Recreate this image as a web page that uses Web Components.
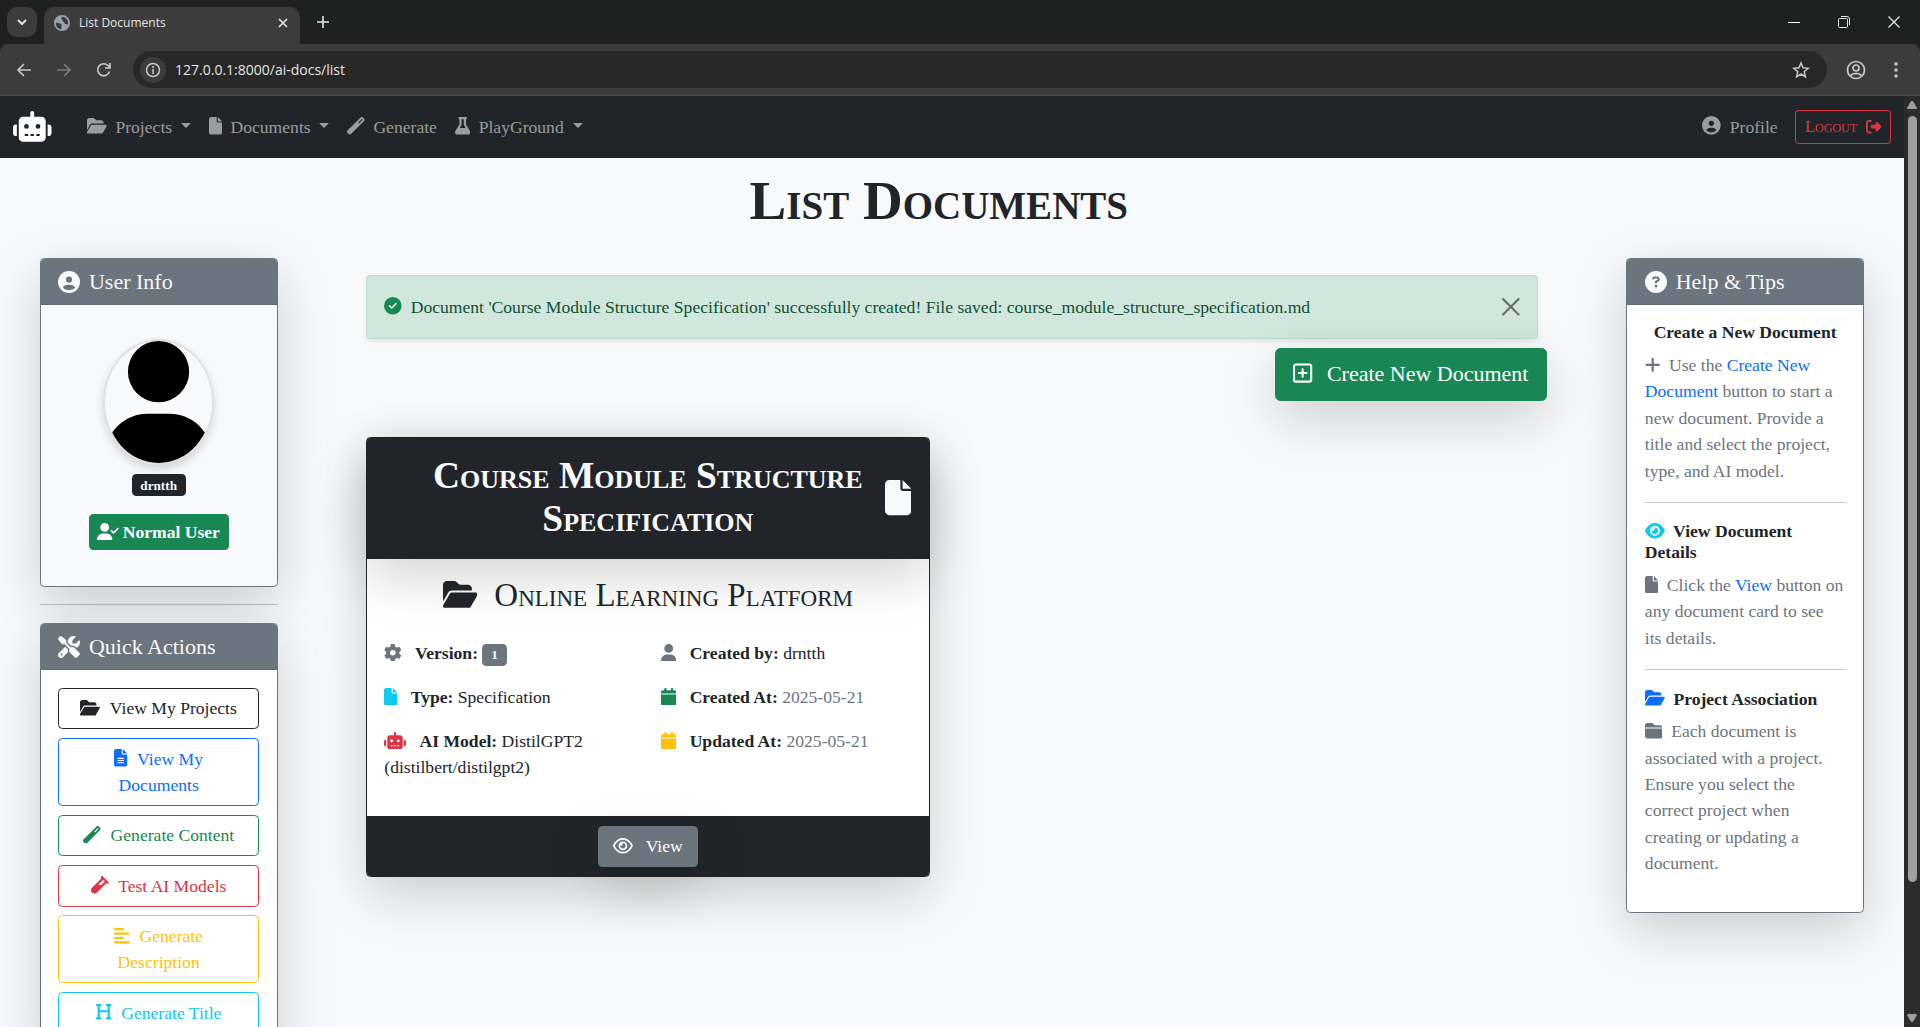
<!DOCTYPE html>
<html lang="en">
<head>
<meta charset="utf-8">
<title>List Documents</title>
<style>
  html, body { height: 100%; }
  body { margin: 0; background: #f8f9fa; font-family: "Liberation Serif", "Times New Roman", serif; color: #212529; }
</style>
</head>
<body>
<browser-window></browser-window>

<script>
const ICONS = {
  'folder-open': [576, 'M88.7 223.8L0 375.8V96C0 60.7 28.7 32 64 32H181.5c17 0 33.3 6.7 45.3 18.7l26.5 26.5c12 12 28.3 18.7 45.3 18.7H416c35.3 0 64 28.7 64 64v32H144c-22.8 0-43.8 12.1-55.3 31.8zm27.6 16.1C122.1 230 132.6 224 144 224H544c11.5 0 22 6.1 27.7 16.1s5.7 22.2-.1 32.1l-112 192C453.9 474 443.4 480 432 480H32c-11.5 0-22-6.1-27.7-16.1s-5.7-22.2 .1-32.1l112-192z'],
  'folder-closed': [512, 'M448 480H64c-35.3 0-64-28.7-64-64V192H512V416c0 35.3-28.7 64-64 64zm64-320H0V96C0 60.7 28.7 32 64 32H192c20.1 0 39.1 9.5 51.2 25.6l19.2 25.6c6 8.1 15.5 12.8 25.6 12.8H448c35.3 0 64 28.7 64 64z'],
  'file': [384, 'M0 64C0 28.7 28.7 0 64 0H224V128c0 17.7 14.3 32 32 32H384V448c0 35.3-28.7 64-64 64H64c-35.3 0-64-28.7-64-64V64zm384 64H256V0L384 128z'],
  'file-lines': [384, 'M64 0C28.7 0 0 28.7 0 64V448c0 35.3 28.7 64 64 64H320c35.3 0 64-28.7 64-64V160H256c-17.7 0-32-14.3-32-32V0H64zM256 0V128H384L256 0zM112 256H272c8.8 0 16 7.2 16 16s-7.2 16-16 16H112c-8.8 0-16-7.2-16-16s7.2-16 16-16zm0 64H272c8.8 0 16 7.2 16 16s-7.2 16-16 16H112c-8.8 0-16-7.2-16-16s7.2-16 16-16zm0 64H272c8.8 0 16 7.2 16 16s-7.2 16-16 16H112c-8.8 0-16-7.2-16-16s7.2-16 16-16z'],
  'circle-user': [512, 'M399 384.2C376.9 345.8 335.4 320 288 320H224c-47.4 0-88.9 25.8-111 64.2c35.2 39.2 86.2 63.8 143 63.8s107.8-24.7 143-63.8zM0 256a256 256 0 1 1 512 0A256 256 0 1 1 0 256zm256 16a72 72 0 1 0 0-144 72 72 0 1 0 0 144z'],
  'user': [448, 'M224 256A128 128 0 1 0 224 0a128 128 0 1 0 0 256zm-45.7 48C79.8 304 0 383.8 0 482.3C0 498.7 13.3 512 29.7 512H418.3c16.4 0 29.7-13.3 29.7-29.7C448 383.8 368.2 304 269.7 304H178.3z'],
  'user-check': [640, 'M96 128a128 128 0 1 1 256 0A128 128 0 1 1 96 128zM0 482.3C0 383.8 79.8 304 178.3 304h91.4C368.2 304 448 383.8 448 482.3c0 16.4-13.3 29.7-29.7 29.7H29.7C13.3 512 0 498.7 0 482.3zM625 177L497 305c-9.4 9.4-24.6 9.4-33.9 0l-64-64c-9.4-9.4-9.4-24.6 0-33.9s24.6-9.4 33.9 0l47 47L591 143c9.4-9.4 24.6-9.4 33.9 0s9.4 24.6 0 33.9z'],
  'robot': [640, 'M320 0c17.7 0 32 14.3 32 32V96H472c39.8 0 72 32.2 72 72V440c0 39.8-32.2 72-72 72H168c-39.8 0-72-32.2-72-72V168c0-39.8 32.2-72 72-72H288V32c0-17.7 14.3-32 32-32zM208 384c-8.8 0-16 7.2-16 16s7.2 16 16 16h32c8.8 0 16-7.2 16-16s-7.2-16-16-16H208zm96 0c-8.8 0-16 7.2-16 16s7.2 16 16 16h32c8.8 0 16-7.2 16-16s-7.2-16-16-16H304zm96 0c-8.8 0-16 7.2-16 16s7.2 16 16 16h32c8.8 0 16-7.2 16-16s-7.2-16-16-16H400zM264 256a40 40 0 1 0 -80 0 40 40 0 1 0 80 0zm152 40a40 40 0 1 0 0-80 40 40 0 1 0 0 80zM48 224H64V416H48c-26.5 0-48-21.5-48-48V272c0-26.5 21.5-48 48-48zm544 0c26.5 0 48 21.5 48 48v96c0 26.5-21.5 48-48 48H576V224h16z'],
  'circle-check': [512, 'M256 512A256 256 0 1 0 256 0a256 256 0 1 0 0 512zM369 209L241 337c-9.4 9.4-24.6 9.4-33.9 0l-64-64c-9.4-9.4-9.4-24.6 0-33.9s24.6-9.4 33.9 0l47 47L335 175c9.4-9.4 24.6-9.4 33.9 0s9.4 24.6 0 33.9z'],
  'circle-question': [512, 'M256 512A256 256 0 1 0 256 0a256 256 0 1 0 0 512zM169.8 165.3c7.9-22.3 29.1-37.3 52.8-37.3h58.3c34.9 0 63.1 28.3 63.1 63.1c0 22.6-12.1 43.5-31.7 54.8L280 264.4c-.2 13-10.9 23.6-24 23.6c-13.3 0-24-10.7-24-24V250.5c0-8.6 4.6-16.5 12.1-20.8l44.3-25.4c4.7-2.7 7.6-7.7 7.6-13.1c0-8.4-6.8-15.1-15.1-15.1H222.6c-3.4 0-6.4 2.1-7.5 5.3l-.4 1.2c-4.4 12.5-18.2 19-30.6 14.6s-19-18.2-14.6-30.6l.4-1.2zM224 352a32 32 0 1 1 64 0 32 32 0 1 1 -64 0z'],
  'gear': [512, 'M495.9 166.6c3.2 8.7 .5 18.4-6.4 24.6l-43.3 39.4c1.1 8.3 1.7 16.8 1.7 25.4s-.6 17.1-1.7 25.4l43.3 39.4c6.9 6.2 9.6 15.9 6.4 24.6c-4.4 11.9-9.7 23.3-15.8 34.3l-4.7 8.1c-6.6 11-14 21.4-22.1 31.2c-5.9 7.2-15.7 9.6-24.5 6.8l-55.7-17.7c-13.4 10.3-28.2 18.9-44 25.4l-12.5 57.1c-2 9.1-9 16.3-18.2 17.8c-13.8 2.3-28 3.5-42.5 3.5s-28.7-1.2-42.5-3.5c-9.2-1.5-16.2-8.7-18.2-17.8l-12.5-57.1c-15.8-6.5-30.6-15.1-44-25.4L83.1 425.9c-8.8 2.8-18.6 .3-24.5-6.8c-8.1-9.8-15.5-20.2-22.1-31.2l-4.7-8.1c-6.1-11-11.4-22.4-15.8-34.3c-3.2-8.7-.5-18.4 6.4-24.6l43.3-39.4C64.6 273.1 64 264.6 64 256s.6-17.1 1.7-25.4L22.4 191.2c-6.9-6.2-9.6-15.9-6.4-24.6c4.4-11.9 9.7-23.3 15.8-34.3l4.7-8.1c6.6-11 14-21.4 22.1-31.2c5.9-7.2 15.7-9.6 24.5-6.8l55.7 17.7c13.4-10.3 28.2-18.9 44-25.4l12.5-57.1c2-9.1 9-16.3 18.2-17.8C227.3 1.2 241.5 0 256 0s28.7 1.2 42.5 3.5c9.2 1.5 16.2 8.7 18.2 17.8l12.5 57.1c15.8 6.5 30.6 15.1 44 25.4l55.7-17.7c8.8-2.8 18.6-.3 24.5 6.8c8.1 9.8 15.5 20.2 22.1 31.2l4.7 8.1c6.1 11 11.4 22.4 15.8 34.3zM256 336a80 80 0 1 0 0-160 80 80 0 1 0 0 160z'],
  'eye': [576, 'M288 32c-80.8 0-145.5 36.8-192.6 80.6C48.6 156 17.3 208 2.5 243.7c-3.3 7.9-3.3 16.7 0 24.6C17.3 304 48.6 356 95.4 399.4C142.5 443.2 207.2 480 288 480s145.5-36.8 192.6-80.6c46.8-43.5 78.1-95.4 93-131.1c3.3-7.9 3.3-16.7 0-24.6c-14.9-35.7-46.2-87.7-93-131.1C433.5 68.8 368.8 32 288 32zM144 256a144 144 0 1 1 288 0 144 144 0 1 1 -288 0zm144-64c0 35.3-28.7 64-64 64c-7.1 0-13.9-1.2-20.3-3.3c-5.5-1.8-11.9 1.6-11.7 7.4c.3 6.9 1.3 13.8 3.2 20.7c13.7 51.2 66.4 81.6 117.6 67.9s81.6-66.4 67.9-117.6c-11.1-41.5-47.8-69.4-88.6-71.1c-5.8-.2-9.2 6.1-7.4 11.7c2.1 6.4 3.3 13.2 3.3 20.3z'],
  'eye-outline': [576, 'M288 80c-65.2 0-118.8 29.6-159.9 67.7C89.6 183.5 63 226 49.4 256c13.6 30 40.2 72.5 78.6 108.3C169.2 402.4 222.8 432 288 432s118.8-29.6 159.9-67.7C486.4 328.5 513 286 526.6 256c-13.6-30-40.2-72.5-78.6-108.3C406.8 109.6 353.2 80 288 80zM95.4 112.6C142.5 68.8 207.2 32 288 32s145.5 36.8 192.6 80.6c46.8 43.5 78.1 95.4 93 131.1c3.3 7.9 3.3 16.7 0 24.6c-14.9 35.7-46.2 87.7-93 131.1C433.5 443.2 368.8 480 288 480s-145.5-36.8-192.6-80.6C48.6 356 17.3 304 2.5 268.3c-3.3-7.9-3.3-16.7 0-24.6C17.3 208 48.6 156 95.4 112.6zM288 336c44.2 0 80-35.8 80-80s-35.8-80-80-80c-.7 0-1.3 0-2 0c1.3 5.1 2 10.5 2 16c0 35.3-28.7 64-64 64c-5.5 0-10.9-.7-16-2c0 .7 0 1.3 0 2c0 44.2 35.8 80 80 80zm0-208a128 128 0 1 1 0 256 128 128 0 1 1 0-256z'],
  'square-plus': [448, 'M64 80c-8.8 0-16 7.2-16 16V416c0 8.8 7.2 16 16 16H384c8.8 0 16-7.2 16-16V96c0-8.8-7.2-16-16-16H64zM0 96C0 60.7 28.7 32 64 32H384c35.3 0 64 28.7 64 64V416c0 35.3-28.7 64-64 64H64c-35.3 0-64-28.7-64-64V96zM200 344V280H136c-13.3 0-24-10.7-24-24s10.7-24 24-24h64V168c0-13.3 10.7-24 24-24s24 10.7 24 24v64h64c13.3 0 24 10.7 24 24s-10.7 24-24 24H248v64c0 13.3-10.7 24-24 24s-24-10.7-24-24z'],
  'plus': [448, 'M256 80c0-17.7-14.3-32-32-32s-32 14.3-32 32V224H48c-17.7 0-32 14.3-32 32s14.3 32 32 32H192V432c0 17.7 14.3 32 32 32s32-14.3 32-32V288H400c17.7 0 32-14.3 32-32s-14.3-32-32-32H256V80z'],
  'calendar': [448, 'M96 32V64H48C21.5 64 0 85.5 0 112v48H448V112c0-26.5-21.5-48-48-48H352V32c0-17.7-14.3-32-32-32s-32 14.3-32 32V64H160V32c0-17.7-14.3-32-32-32S96 14.3 96 32zM448 192H0V464c0 26.5 21.5 48 48 48H400c26.5 0 48-21.5 48-48V192z'],
  'sign-out': [512, 'M377.9 105.9L500.7 228.7c7.2 7.2 11.3 17.1 11.3 27.3s-4.1 20.1-11.3 27.3L377.9 406.1c-6.4 6.4-15 9.9-24 9.9c-18.7 0-33.9-15.2-33.9-33.9l0-62.1-128 0c-17.7 0-32-14.3-32-32l0-64c0-17.7 14.3-32 32-32l128 0 0-62.1c0-18.7 15.2-33.9 33.9-33.9c9 0 17.6 3.6 24 9.9zM160 96L96 96c-17.7 0-32 14.3-32 32l0 256c0 17.7 14.3 32 32 32l64 0c17.7 0 32 14.3 32 32s-14.3 32-32 32l-64 0c-53 0-96-43-96-96L0 128C0 75 43 32 96 32l64 0c17.7 0 32 14.3 32 32s-14.3 32-32 32z'],
  'flask': [448, 'M288 0H160 128C110.3 0 96 14.3 96 32s14.3 32 32 32V196.8c0 11.8-3.3 23.5-9.5 33.5L10.3 406.2C3.6 417.2 0 429.7 0 442.6C0 480.9 31.1 512 69.4 512H378.6c38.3 0 69.4-31.1 69.4-69.4c0-12.8-3.6-25.4-10.3-36.4L329.5 230.4c-6.2-10.1-9.5-21.7-9.5-33.5V64c17.7 0 32-14.3 32-32s-14.3-32-32-32H288zM192 196.8V64h64V196.8c0 23.7 6.6 46.9 19 67.1L309.5 320h-171L173 263.9c12.4-20.2 19-43.4 19-67.1z'],
  'align-left': [448, 'M288 64c0 17.7-14.3 32-32 32H32C14.3 96 0 81.7 0 64S14.3 32 32 32H256c17.7 0 32 14.3 32 32zm0 256c0 17.7-14.3 32-32 32H32c-17.7 0-32-14.3-32-32s14.3-32 32-32H256c17.7 0 32 14.3 32 32zM0 192c0-17.7 14.3-32 32-32H416c17.7 0 32 14.3 32 32s-14.3 32-32 32H32c-17.7 0-32-14.3-32-32zM448 448c0 17.7-14.3 32-32 32H32c-17.7 0-32-14.3-32-32s14.3-32 32-32H416c17.7 0 32 14.3 32 32z'],
  'heading': [448, 'M0 64C0 46.3 14.3 32 32 32H80h48c17.7 0 32 14.3 32 32s-14.3 32-32 32H112V208H336V96H320c-17.7 0-32-14.3-32-32s14.3-32 32-32h48 48c17.7 0 32 14.3 32 32s-14.3 32-32 32H400V240 416h16c17.7 0 32 14.3 32 32s-14.3 32-32 32H368 320c-17.7 0-32-14.3-32-32s14.3-32 32-32h16V272H112V416h16c17.7 0 32 14.3 32 32s-14.3 32-32 32H80 32c-17.7 0-32-14.3-32-32s14.3-32 32-32H48V240 96H32C14.3 96 0 81.7 0 64z'],
  'wand': [512, 'M14.1 463.3c-18.7-18.7-18.7-49.1 0-67.9L395.4 14.1c18.7-18.7 49.1-18.7 67.9 0l34.6 34.6c18.7 18.7 18.7 49.1 0 67.9L116.5 497.9c-18.7 18.7-49.1 18.7-67.9 0L14.1 463.3zM347.6 187.6l105-105L429.4 59.3l-105 105 23.3 23.3z'],
  'vial': [512, 'M342.6 9.4c-12.5-12.5-32.8-12.5-45.3 0s-12.5 32.8 0 45.3l9.4 9.4L28.1 342.6C10.1 360.6 0 385 0 410.5V416c0 53 43 96 96 96h5.5c25.5 0 49.9-10.1 67.9-28.1L448 205.3l9.4 9.4c12.5 12.5 32.8 12.5 45.3 0s12.5-32.8 0-45.3l-32-32-96-96-32-32zM205.3 256L352 109.3 402.7 160l-96 96H205.3z'],
  'tools': [512, 'M78.6 5C69.1-2.4 55.6-1.5 47 7L7 47c-8.5 8.5-9.4 22-2.1 31.6l80 104c4.5 5.9 11.6 9.4 19 9.4h54.1l109 109c-14.7 29-10 65.4 14.3 89.6l112 112c12.5 12.5 32.8 12.5 45.3 0l64-64c12.5-12.5 12.5-32.8 0-45.3l-112-112c-24.2-24.2-60.6-29-89.6-14.3l-109-109V104c0-7.5-3.5-14.5-9.4-19L78.6 5zM19.9 396.1C7.2 408.8 0 426.1 0 444.1C0 481.6 30.4 512 67.9 512c18 0 35.3-7.2 48-19.9L233.7 374.3c-7.8-20.9-9-43.6-3.6-65.1l-61.7-61.7L19.9 396.1zM512 144c0-10.5-1.1-20.7-3.2-30.5c-2.4-11.2-16.1-14.1-24.2-6l-63.9 63.9c-3 3-7.1 4.7-11.3 4.7H352c-8.8 0-16-7.2-16-16V102.6c0-4.2 1.7-8.3 4.7-11.3l63.9-63.9c8.1-8.1 5.2-21.8-6-24.2C388.7 1.1 378.5 0 368 0C288.5 0 224 64.5 224 144l0 .8 85.3 85.3c36-9.1 75.8 .5 104 28.7L429 274.5c49-23 83-72.8 83-130.5zM56 432a24 24 0 1 1 48 0 24 24 0 1 1 -48 0z']
};

const define = (name, html) => customElements.define(name, class extends HTMLElement {
  constructor() {
    super();
    this.attachShadow({ mode: 'open' }).innerHTML = '<style>*,*::before,*::after{box-sizing:border-box}</style>' + html;
  }
});

customElements.define('doc-icon', class extends HTMLElement {
  connectedCallback() {
    if (this.shadowRoot) return;
    const [w, d] = ICONS[this.getAttribute('name')];
    this.attachShadow({ mode: 'open' }).innerHTML = `
      <style>
        :host { display: inline-block; vertical-align: -0.125em; line-height: 1; flex: none; }
        svg { display: block; height: 1em; fill: currentColor; }
      </style>
      <svg viewBox="0 0 ${w} 512" aria-hidden="true"><path d="${d}"/></svg>`;
  }
});

/* Shared button: variant sets the colour, size sets the metrics */
customElements.define('app-button', class extends HTMLElement {
  connectedCallback() {
    if (this.shadowRoot) return;
    const icon = this.getAttribute('icon');
    const mark = icon ? `<doc-icon name="${icon}"></doc-icon> ` : '';
    const end = this.getAttribute('icon-end');
    const tail = end ? ` <doc-icon class="end" name="${end}"></doc-icon>` : '';
    this.attachShadow({ mode: 'open' }).innerHTML = `
      <style>
        :host { display: block; --c: #212529; }
        :host([variant=primary]) { --c: #0d6efd; }
        :host([variant=success]) { --c: #198754; }
        :host([variant=danger]) { --c: #dc3545; }
        :host([variant=warning]) { --c: #ffc107; }
        :host([variant=info]) { --c: #0dcaf0; }
        :host([variant=secondary]) { --c: #6c757d; }
        button { box-sizing: border-box; width: 100%; margin: 0; font: inherit; font-size: 16px; line-height: 24px; text-align: center;
          padding: 6px 13px; border: 1px solid var(--c); border-radius: 4px; color: var(--c); background: transparent; cursor: pointer; }
        :host([solid]) button { background: var(--c); color: #fff; box-shadow: 0 16px 48px rgba(0,0,0,.175); }
        :host([size=lg]) button { font-size: 20px; line-height: 31px; padding: 8px 16px; border-radius: 5px; }
        :host([size=sm]) button { font-size: 15px; line-height: 21px; padding: 4px 8px; border-radius: 3px; font-variant: small-caps; }
        doc-icon { margin-right: 5px; }
        :host([solid]) doc-icon { margin-right: 8px; }
        doc-icon.end { margin: 0 0 0 4px; font-size: 14px; }
      </style>
      <button type="button">${mark}<slot></slot>${tail}</button>`;
  }
});

define('side-card', `
  <style>
    :host { display: block; border: 1px solid #6c757d; border-radius: 4px; background: var(--card-bg, #fff);
      box-shadow: 0 16px 48px rgba(0,0,0,.175); }
    header { padding: 9px 16px 8px; background: #6c757d; border-bottom: 1px solid #616971; color: #f8f9fa; border-radius: 3px 3px 0 0;
      font-size: 20px; line-height: 24px; }
    .body { padding: 16px; }
    ::slotted(h2) { margin: 0; font-size: 20px; font-weight: 400; display: flex; align-items: center; gap: 8px; }
  </style>
  <header><slot name="title"></slot></header>
  <div class="body"><slot></slot></div>`);

define('site-nav', `
  <style>
    :host { display: block; background: #212529; color: rgba(255,255,255,.55); }
    nav { display: flex; align-items: center; min-height: 56px; padding: 0 12px; }
    ul { display: flex; list-style: none; margin: 0; padding: 0; flex: 1; }
    a { color: inherit; text-decoration: none; display: block; padding: 8px; line-height: 24px; }
    .brand { color: #fff; font-size: 28px; line-height: 1; padding: 0; margin-right: 24px; }
    .brand doc-icon { display: block; margin: 0; }
    doc-icon { margin-right: 4px; }
    .drop::after { content: ""; display: inline-block; margin-left: 8px; vertical-align: 4px;
      border: 5px solid transparent; border-top-color: currentColor; border-bottom: 0; }
    .profile { margin-right: 8px; }
    .profile doc-icon { font-size: 17px; }
  </style>
  <nav>
    <a class="brand" href="#home" aria-label="Home"><doc-icon name="robot"></doc-icon></a>
    <ul>
      <li><a class="drop" href="#projects"><doc-icon name="folder-open"></doc-icon> Projects</a></li>
      <li><a class="drop" href="#documents"><doc-icon name="file"></doc-icon> Documents</a></li>
      <li><a href="#generate"><doc-icon name="wand"></doc-icon> Generate</a></li>
      <li><a class="drop" href="#playground"><doc-icon name="flask"></doc-icon> PlayGround</a></li>
    </ul>
    <a class="profile" href="#profile"><doc-icon name="circle-user"></doc-icon> Profile</a>
    <app-button variant="danger" size="sm" icon-end="sign-out">Logout</app-button>
  </nav>`);

define('user-info', `
  <style>
    :host { display: block; }
    side-card { --card-bg: #f8f9fa; }
    .who { display: flex; flex-direction: column; align-items: center; padding: 15px 0 16px; }
    .avatar { display: block; width: 101px; height: 115px; border: 2px solid #dee2e6; border-radius: 50%; overflow: hidden;
      box-shadow: 0 4px 8px rgba(0,0,0,.15); background: #f8f9fa; }
    .avatar svg { display: block; width: 100%; height: 100%; }
    .badge { background: #212529; color: #f8f9fa; font-weight: 700; font-size: 12px; line-height: 12px; padding: 4px 8px; border-radius: 4px; margin-top: 8px; }
    .badge.role { background: #198754; color: #fff; font-size: 16px; line-height: 17px; padding: 8px; margin-top: 16px; }
    .role doc-icon { margin-right: 3px; }
  </style>
  <side-card>
    <h2 slot="title"><doc-icon name="circle-user"></doc-icon>User Info</h2>
    <div class="who">
      <span class="avatar"><svg viewBox="0 0 448 512" preserveAspectRatio="xMidYMid slice" role="img" aria-label="Avatar"><path d="${ICONS.user[1]}"/></svg></span>
      <span class="badge">drntth</span>
      <span class="badge role"><doc-icon name="user-check"></doc-icon>Normal User</span>
    </div>
  </side-card>`);

define('quick-actions', `
  <style>
    :host { display: block; }
    .list { display: grid; gap: 8px; }
  </style>
  <side-card>
    <h2 slot="title"><doc-icon name="tools"></doc-icon>Quick Actions</h2>
    <div class="list">
      <app-button icon="folder-open">View My Projects</app-button>
      <app-button variant="primary" icon="file-lines">View My Documents</app-button>
      <app-button variant="success" icon="wand">Generate Content</app-button>
      <app-button variant="danger" icon="vial">Test AI Models</app-button>
      <app-button variant="warning" icon="align-left">Generate Description</app-button>
      <app-button variant="info" icon="heading">Generate Title</app-button>
    </div>
  </side-card>`);

define('success-alert', `
  <style>
    :host { display: flex; align-items: center; padding: 16px; border: 1px solid #badbcc; border-radius: 4px; background: #d1e7dd;
      color: #0f5132; line-height: 24px; box-shadow: 0 2px 4px rgba(0,0,0,.075); }
    p { margin: 0; flex: 1; }
    doc-icon { color: #198754; margin-right: 4px; }
    button { border: 0; background: none; padding: 0; width: 16px; height: 16px; opacity: .5; cursor: pointer; }
    svg { display: block; width: 16px; height: 16px; }
  </style>
  <p role="status"><doc-icon name="circle-check"></doc-icon> <slot></slot></p>
  <button type="button" aria-label="Close"><svg viewBox="0 0 16 16"><path d="M.293.293a1 1 0 0 1 1.414 0L8 6.586 14.293.293a1 1 0 1 1 1.414 1.414L9.414 8l6.293 6.293a1 1 0 0 1-1.414 1.414L8 9.414l-6.293 6.293a1 1 0 0 1-1.414-1.414L6.586 8 .293 1.707a1 1 0 0 1 0-1.414z"/></svg></button>`);

define('document-card', `
  <style>
    :host { display: block; border: 1px solid #212529; border-radius: 4px; background: #fff; box-shadow: 0 16px 48px rgba(0,0,0,.175); }
    header { display: grid; grid-template-columns: 24px 1fr 24px; align-items: center; padding: 16px; background: #212529; color: #f8f9fa;
      border-radius: 3px 3px 0 0; box-shadow: 0 16px 48px rgba(0,0,0,.175); }
    header doc-icon { font-size: 32px; }
    h2 { grid-column: 2; margin: 0; font-size: 34px; line-height: 39px; font-variant: small-caps; text-align: center; }
    h3 { margin: 0; font-size: 30px; line-height: 36px; font-weight: 400; font-variant: small-caps; text-align: center; }
    h3 doc-icon { font-size: 28px; margin-right: 8px; }
    .body { padding: 16px; }
    .facts { display: grid; grid-template-columns: 1fr 1fr; gap: 16px 24px; margin: 22px 0 16px; line-height: 24px; }
    .facts doc-icon { margin-right: 8px; }
    .badge { display: inline-block; background: #6c757d; color: #f8f9fa; font-weight: 700; font-size: 12px; line-height: 12px; padding: 4px 8px; border-radius: 4px; }
    .muted, time { color: #6c757d; }
    footer { display: flex; justify-content: center; padding: 9px 16px 8px; background: #212529; border-radius: 0 0 3px 3px; }
  </style>
  <header><h2>Course Module Structure Specification</h2><doc-icon name="file"></doc-icon></header>
  <div class="body">
    <h3><doc-icon name="folder-open"></doc-icon> Online Learning Platform</h3>
    <div class="facts">
      <div><doc-icon name="gear" class="muted"></doc-icon> <b>Version:</b> <span class="badge">1</span></div>
      <div><doc-icon name="user" class="muted"></doc-icon> <b>Created by:</b> drntth</div>
      <div><doc-icon name="file" style="color:#0dcaf0"></doc-icon> <b>Type:</b> Specification</div>
      <div><doc-icon name="calendar" style="color:#198754"></doc-icon> <b>Created At:</b> <time>2025-05-21</time></div>
      <div><doc-icon name="robot" style="color:#dc3545"></doc-icon> <b>AI Model:</b> DistilGPT2 (distilbert/distilgpt2)</div>
      <div><doc-icon name="calendar" style="color:#ffc107"></doc-icon> <b>Updated At:</b> <time>2025-05-21</time></div>
    </div>
  </div>
  <footer><app-button solid variant="secondary" icon="eye-outline">View</app-button></footer>`);

define('help-tips', `
  <style>
    :host { display: block; }
    h3 { margin: 0 0 8px; font-size: 16px; line-height: 19px; }
    h3.plain { padding-left: 8px; }
    p { margin: 0 0 16px; line-height: 24px; color: #6c757d; }
    a { color: #0d6efd; text-decoration: none; }
    doc-icon { margin-right: 4px; }
    hr { border: 0; border-top: 1px solid #212529; opacity: .25; margin: 16px 0 17px; }
  </style>
  <side-card>
    <h2 slot="title"><doc-icon name="circle-question" style="margin:0"></doc-icon>Help &amp; Tips</h2>
    <h3 class="plain">Create a New Document</h3>
    <p><doc-icon name="plus"></doc-icon> Use the <a href="#create">Create New Document</a> button to start a new document. Provide a title and select the project, type, and AI model.</p>
    <hr>
    <h3><doc-icon name="eye" style="color:#0dcaf0"></doc-icon> View Document Details</h3>
    <p><doc-icon name="file"></doc-icon> Click the <a href="#view">View</a> button on any document card to see its&nbsp;details.</p>
    <hr>
    <h3><doc-icon name="folder-open" style="color:#0d6efd"></doc-icon> Project Association</h3>
    <p><doc-icon name="folder-closed"></doc-icon> Each document is associated with a project. Ensure you select the correct project when creating or updating a document.</p>
  </side-card>`);

/* The site itself, shown at the browser's 110% page zoom */
define('documents-page', `
  <style>
    :host { display: block; zoom: 1.1; background: #f8f9fa; overflow: hidden; font-size: 16px; }
    h1 { margin: 10px 24px 23px 0; font-size: 50px; line-height: 58px; font-variant: small-caps; text-align: center; }
    .columns { display: grid; grid-template-columns: 2fr 8fr 2fr; align-items: start; }
    .columns > * { padding: 0 36px; min-width: 0; }
    hr { border: 0; border-top: 1px solid #212529; opacity: .25; margin: 16px 0; }
    success-alert { margin: 16px 8px 8px; }
    .actions { display: flex; justify-content: flex-end; }
    .cards { display: grid; grid-template-columns: 1fr 1fr; gap: 40px; margin: 32px 8px; }
  </style>
  <site-nav></site-nav>
  <main>
    <h1>List Documents</h1>
    <div class="columns">
      <aside><user-info></user-info><hr><quick-actions></quick-actions></aside>
      <section>
        <success-alert>Document 'Course Module Structure Specification' successfully created! File saved: course_module_structure_specification.md</success-alert>
        <div class="actions"><app-button solid variant="success" size="lg" icon="square-plus">Create New Document</app-button></div>
        <div class="cards"><document-card></document-card></div>
      </section>
      <aside><help-tips></help-tips></aside>
    </div>
  </main>`);

define('tab-strip', `
  <style>
    :host { display: flex; align-items: center; height: 44px; background: #1f2020; color: #e3e3e3; padding: 0 1px 0 7px; }
    button { border: 0; background: none; color: inherit; padding: 0; display: grid; place-items: center; }
    svg { display: block; fill: none; stroke: currentColor; }
    .search { width: 30px; height: 30px; border-radius: 10px; background: #3c3c3c; margin-right: 7px; }
    .tab { align-self: flex-end; display: flex; align-items: center; gap: 9px; width: 256px; height: 37px; padding: 0 9px 6px 10px;
      background: #3c3c3c; border-radius: 10px 10px 0 0; font: 12px "Open Sans", "Noto Sans", sans-serif; }
    .tab span { flex: 1; }
    .new { width: 28px; height: 28px; margin: 0 auto 0 9px; }
    .win { width: 50px; height: 36px; }
  </style>
  <button class="search" aria-label="Search tabs"><svg width="10" height="6" stroke-width="2"><path d="M1 1l4 4 4-4"/></svg></button>
  <div class="tab">
    <svg width="16" height="16" viewBox="0 0 16 16"><circle cx="8" cy="8" r="8" fill="#9aa0a6" stroke="none"/><path fill="#3c3c3c" stroke="none" d="M2 7.500l4 1c2 .5 1.500 2 1.500 3l-.5 2.700C4 14 1.800 11.500 1.800 8zM9 1.800C7 2.500 6.500 4 8 4.500s1 2 .5 2.500H10l1 2 3 .5c.5-3.500-1-6.500-5-7.700z"/></svg>
    <span>List Documents</span>
    <button aria-label="Close tab"><svg width="16" height="16" stroke-width="1.700"><path d="M4 4l8 8M12 4l-8 8"/></svg></button>
  </div>
  <button class="new" aria-label="New tab"><svg width="14" height="14" stroke-width="1.600"><path d="M7 1v12M1 7h12"/></svg></button>
  <button class="win" aria-label="Minimize"><svg width="12" height="12"><path d="M0 6.500h12" stroke="#fff"/></svg></button>
  <button class="win" aria-label="Restore"><svg width="12" height="12"><rect x=".5" y="2.500" width="9" height="9" rx="1"/><path d="M3 .5h6a2.500 2.500 0 0 1 2.500 2.500v6"/></svg></button>
  <button class="win" aria-label="Close"><svg width="12" height="12" stroke-width="1.300"><path d="M.5.5l11 11M11.500.5l-11 11"/></svg></button>`);

define('tool-bar', `
  <style>
    :host { display: block; background: #1f2020; }
    .bar { display: flex; align-items: center; height: 52px; background: #3c3c3c; border-bottom: 1px solid #4a4a4a; border-radius: 8px 8px 0 0; padding: 0 4px; color: #c7c7c7; }
    button { border: 0; background: none; color: inherit; padding: 0; width: 40px; height: 36px; display: grid; place-items: center; }
    svg { display: block; fill: none; stroke: currentColor; stroke-width: 1.700; }
    button:disabled { color: #7c7c7c; }
    .address { flex: 1; display: flex; align-items: center; height: 37px; margin: 0 9px; border-radius: 19px; background: #282828; padding-left: 7px; }
    .info { width: 26px; height: 26px; border-radius: 13px; background: #3c3c3c; }
    input { flex: 1; min-width: 0; border: 0; background: none; color: #e3e3e3; font: 14px "Open Sans", "Noto Sans", sans-serif; padding: 0 9px; outline: 0; }
    .star { width: 52px; }
  </style>
  <div class="bar">
    <button aria-label="Back"><svg width="14" height="14"><path d="M7 1L1 7l6 6M1 7h13"/></svg></button>
    <button aria-label="Forward" disabled><svg width="14" height="14"><path d="M7 1l6 6-6 6M13 7H0"/></svg></button>
    <button aria-label="Reload"><svg width="16" height="16"><path d="M13.500 9.500A6 6 0 1 1 12 3.500l2 2M14 1v5H9"/></svg></button>
    <div class="address">
      <button class="info" aria-label="Site information"><svg width="16" height="16" style="stroke-width:1.500"><circle cx="8" cy="8" r="6.500"/><path d="M8 7v5M8 4v2"/></svg></button>
      <input type="text" aria-label="Address" value="127.0.0.1:8000/ai-docs/list">
      <button class="star" aria-label="Bookmark"><svg width="18" height="18" style="stroke-width:1.500"><path d="M9 2l2 4.800 5.200.5-4 3.400 1.200 5.100L9 13l-4.400 2.800 1.200-5.100-4-3.400L7 6.800z"/></svg></button>
    </div>
    <button aria-label="Profile"><svg width="20" height="20" style="stroke-width:1.700"><circle cx="10" cy="10" r="8.500"/><circle cx="10" cy="8" r="3"/><path d="M4 16c3-3.500 9-3.500 12 0"/></svg></button>
    <button aria-label="Menu"><svg width="4" height="18" style="fill:currentColor;stroke:none"><circle cx="2" cy="3" r="1.800"/><circle cx="2" cy="9" r="1.800"/><circle cx="2" cy="15" r="1.800"/></svg></button>
    </div>`);

define('scroll-rail', `
  <style>
    :host { display: flex; flex-direction: column; align-items: center; width: 16px; background: #2c2c2c; color: #9f9f9f; padding: 5px 0; box-sizing: border-box; }
    svg { display: block; fill: currentColor; }
    .track { flex: 1; width: 9px; margin: 6px 0; }
    .thumb { height: 86%; border-radius: 5px; background: currentColor; }
  </style>
  <svg width="10" height="9"><path d="M5 0q1 0 1.500 1L10 7q0 1-1 1H1Q0 8 0 7l3.500-6Q4 0 5 0z"/></svg>
  <div class="track"><div class="thumb"></div></div>
  <svg width="10" height="9"><path d="M5 9q1 0 1.500-1L10 2q0-1-1-1H1Q0 1 0 2l3.500 6Q4 9 5 9z"/></svg>`);

define('browser-window', `
  <style>
    :host { display: flex; flex-direction: column; height: 100vh; overflow: hidden; }
    .view { flex: 1; min-height: 0; display: flex; }
    documents-page { flex: 1; min-width: 0; }
  </style>
  <tab-strip></tab-strip>
  <tool-bar></tool-bar>
  <div class="view"><documents-page></documents-page><scroll-rail></scroll-rail></div>`);
</script>
</body>
</html>
